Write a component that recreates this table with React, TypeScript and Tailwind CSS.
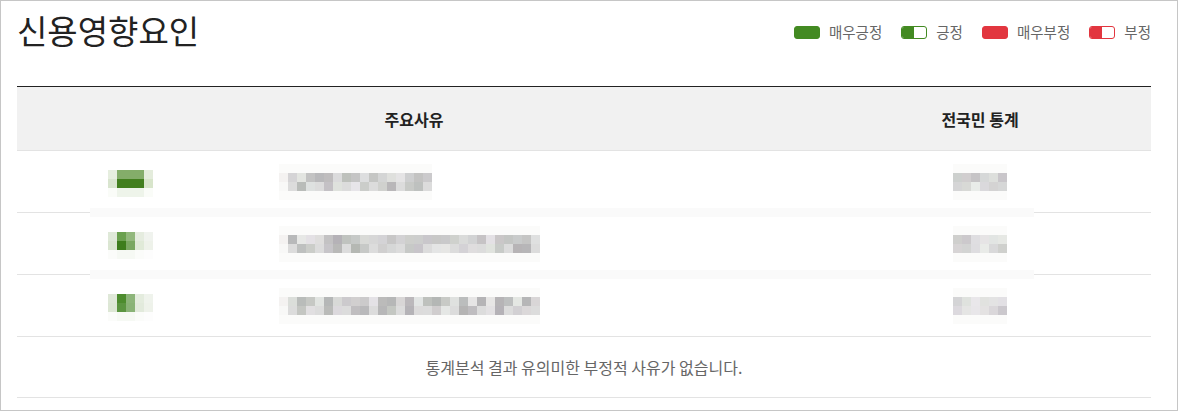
import React from 'react';

const GREEN = '#438a22';
const RED = '#e2363f';

// deterministic gray shades for the pixelated (masked) text
function shades(seed: number, n: number, base = 180, range = 52) {
  let s = seed;
  const out: string[] = [];
  for (let i = 0; i < n; i++) {
    s = (s * 9301 + 49297) % 233280;
    const v = base + Math.floor((s / 233280) * range);
    const t = Math.max(0, Math.min(255, v + ((s % 7) - 3)));
    out.push(`rgb(${v},${t},${v + ((s % 5) - 2)})`);
  }
  return out;
}

function Pixels({ grid }: { grid: string[][] }) {
  return (
    <div className="flex flex-col">
      {grid.map((row, r) => (
        <div key={r} className="flex">
          {row.map((c, i) => (
            <div key={i} className="w-[9px] h-[9px]" style={{ backgroundColor: c }} />
          ))}
        </div>
      ))}
    </div>
  );
}

function maskedText(seed: number, n: number) {
  const a = shades(seed, n);
  const b = shades(seed + 17, n).map((c, i) => (i % 3 === 0 ? '#dcdcdc' : c));
  const faint = Array(n + 1).fill('#fbfbfa');
  return [faint, ['#f4f2f1', ...a], ['#f8f8f7', ...b], faint];
}

function maskedStat(seed: number) {
  const faint = Array(6).fill('#fbfbfa');
  return [faint, shades(seed, 6, 198, 36), shades(seed + 5, 6, 200, 34), faint];
}

const icons: string[][][] = [
  [
    ['#e6eedf', '#84ad6a', '#84ad6a', '#84ad6a', '#e4ecdc'],
    ['#d9e5cf', '#427f1e', '#427f1e', '#427f1e', '#d8e5cb'],
    ['#fafcf8', '#eef4ea', '#eef4ea', '#eef4ea', '#fafcf8'],
  ],
  [
    ['#dfe9d8', '#6aa04e', '#92b87c', '#e5ecdf', '#f0f3ee'],
    ['#dbe6d2', '#3d7d1c', '#7aa862', '#e0ead8', '#eef2ea'],
    ['#fbfcfa', '#f6f9f4', '#f6f9f4', '#fbfcfa', '#fdfdfd'],
  ],
  [
    ['#dfe8d8', '#4d8c2e', '#8db57a', '#e4ecde', '#eff3ec'],
    ['#dde7d5', '#5b9540', '#8ab377', '#e2eadc', '#eef2ea'],
    ['#fbfcfa', '#f6f9f4', '#f6f9f4', '#fbfcfa', '#fdfdfd'],
  ],
];

const rows = [
  { icon: icons[0], text: maskedText(11, 16), stat: maskedStat(301) },
  { icon: icons[1], text: maskedText(47, 28), stat: maskedStat(503) },
  { icon: icons[2], text: maskedText(89, 28), stat: maskedStat(707) },
];

function Legend() {
  const items = [
    { label: '매우긍정', color: GREEN, half: false },
    { label: '긍정', color: GREEN, half: true },
    { label: '매우부정', color: RED, half: false },
    { label: '부정', color: RED, half: true },
  ];
  return (
    <div className="flex items-center gap-[19px] mt-[24px]">
      {items.map((it) => (
        <div key={it.label} className="flex items-center gap-[9px]">
          <div
            className="w-[26px] h-[13px] rounded-[3px] border flex overflow-hidden"
            style={{ borderColor: it.color, backgroundColor: it.half ? '#fff' : it.color }}
          >
            {it.half && <div className="w-1/2 h-full" style={{ backgroundColor: it.color }} />}
          </div>
          <span className="text-[14.5px] leading-none text-[#666]">{it.label}</span>
        </div>
      ))}
    </div>
  );
}

function Divider() {
  return (
    <div className="flex items-center h-px">
      <div className="w-[73px] h-px bg-[#e3e3e3]" />
      <div className="w-[944px] h-[9px] bg-[#fafafa]" />
      <div className="flex-1 h-px bg-[#e3e3e3]" />
    </div>
  );
}

export default function App() {
  return (
    <div
      className="w-[1178px] h-[411px] border border-[#c6c6c6] bg-white pl-[16px] overflow-hidden"
      style={{ fontFamily: '"Noto Sans CJK KR", "Noto Sans", sans-serif' }}
    >
      <div className="w-[1134px]">
        <div className="flex justify-between items-start h-[85px]">
          <h1 className="text-[33px] leading-none font-normal text-[#222] mt-[13px]">
            신용영향요인
          </h1>
          <Legend />
        </div>

        <div className="border-t border-[#222]">
          <div className="grid grid-cols-[227px_340px_225px_342px] h-[64px] items-center bg-[#f1f1f1] border-b border-[#e3e3e3] text-[16px] font-bold text-[#222]">
            <div />
            <div className="text-center">주요사유</div>
            <div />
            <div className="text-center">전국민 통계</div>
          </div>

          {rows.map((r, i) => (
            <React.Fragment key={i}>
              {i > 0 && <Divider />}
              <div className="grid grid-cols-[227px_340px_225px_342px] h-[61px] items-center">
                <div className="flex justify-center pt-[3px]">
                  <Pixels grid={r.icon} />
                </div>
                <div className="flex pl-[35px]">
                  <Pixels grid={r.text} />
                </div>
                <div />
                <div className="flex justify-center">
                  <Pixels grid={r.stat} />
                </div>
              </div>
            </React.Fragment>
          ))}

          <div className="h-[62px] border-t border-b border-[#e3e3e3] flex items-center justify-center text-[16px] text-[#666]">
            통계분석 결과 유의미한 부정적 사유가 없습니다.
          </div>
        </div>
      </div>
    </div>
  );
}
